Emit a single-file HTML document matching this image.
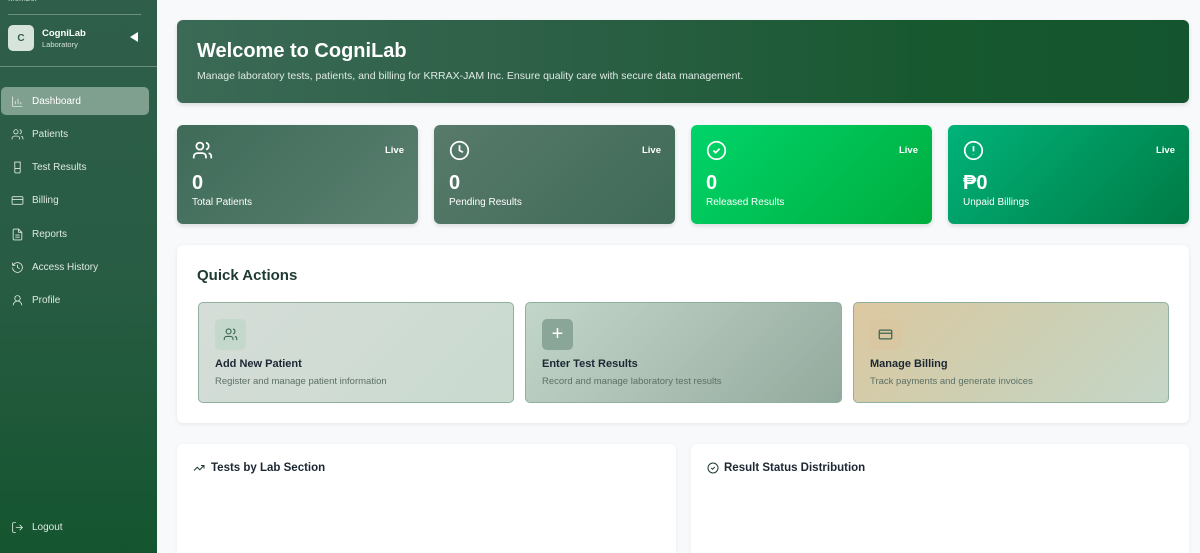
<!DOCTYPE html>
<html style="overflow:hidden;height:553px"><head><meta charset="utf-8"><style>
*{box-sizing:border-box;margin:0;padding:0}
body{width:1200px;height:553px;overflow:hidden;background:#f7f9fb;font-family:"Liberation Sans",sans-serif;position:relative}
.sb{position:absolute;left:0;top:0;width:157px;height:553px;background:linear-gradient(180deg,#2f5f4b 0%,#285c43 50%,#14552f 100%);color:#e6efe9}
.abs{position:absolute}
.nav{position:absolute;left:0;width:157px;height:28px;font-size:10px;color:#dfe9e3;display:flex;align-items:center;padding-left:11px}
.nav svg{width:13px;height:13px;margin-right:8px;stroke:#dfe9e3;fill:none;stroke-width:1.6}
.card{position:absolute;border-radius:6px;box-shadow:0 2px 5px rgba(0,0,0,.12)}
.stat{top:125px;width:241px;height:99px;color:#fff}
.stat svg{position:absolute;left:15px;top:15px;width:21px;height:21px;stroke:#fff;fill:none;stroke-width:2}
.stat .live{position:absolute;right:14px;top:20px;font-size:9.5px;font-weight:bold}
.stat .n{position:absolute;left:15px;top:47px;font-size:20px;font-weight:bold}
.stat .l{position:absolute;left:15px;top:72px;font-size:10px}
.qa{position:absolute;top:302px;height:101px;border:1.5px solid #8fb09f;border-radius:5px}
.qa .ic{position:absolute;left:16px;top:16px;width:31px;height:31px;border-radius:5px;display:flex;align-items:center;justify-content:center}
.qa .t{position:absolute;left:16px;top:55px;font-size:11px;font-weight:bold;color:#1c2733}
.qa .d{position:absolute;left:16px;top:73px;font-size:9.5px;color:#5d7066}
</style></head><body>
<div class="sb">
  <div class="abs" style="left:8px;top:-6px;font-size:8px;color:#cfdcd4">Member</div>
  <div class="abs" style="left:8px;top:14px;width:133px;border-top:1px solid #6d8f7e"></div>
  <div class="abs" style="left:8px;top:25px;width:26px;height:26px;border-radius:5px;background:#d7e4dc;color:#2f5f4b;font-size:10px;font-weight:bold;display:flex;align-items:center;justify-content:center">C</div>
  <div class="abs" style="left:42px;top:28px;font-size:9.5px;font-weight:bold;color:#fff">CogniLab</div>
  <div class="abs" style="left:42px;top:40px;font-size:7.5px;color:#d3e0d8">Laboratory</div>
  <div class="abs" style="left:130px;top:32px;width:0;height:0;border-top:5px solid transparent;border-bottom:5px solid transparent;border-right:8px solid #fff"></div>
  <div class="abs" style="left:0;top:66px;width:157px;border-top:1px solid #6d8f7e"></div>
  <div class="abs" style="left:1px;top:87px;width:148px;height:28px;border-radius:5px;background:#7f9f8f"></div>
  <div class="nav" style="top:87px;color:#fff"><svg viewBox="0 0 24 24"><path d="M3 3v18h18M8 17v-6M13 17V7M18 17v-4"/></svg>Dashboard</div>
  <div class="nav" style="top:120px"><svg viewBox="0 0 24 24"><circle cx="9" cy="7" r="4"/><path d="M2 21v-2a4 4 0 0 1 4-4h6a4 4 0 0 1 4 4v2M16 3.1a4 4 0 0 1 0 7.8M22 21v-2a4 4 0 0 0-3-3.9"/></svg>Patients</div>
  <div class="nav" style="top:153px"><svg viewBox="0 0 24 24"><path d="M6 2h12M7 2v18a2 2 0 0 0 2 2h6a2 2 0 0 0 2-2V2M7 14h10"/></svg>Test Results</div>
  <div class="nav" style="top:186px"><svg viewBox="0 0 24 24"><rect x="2" y="5" width="20" height="14" rx="2"/><path d="M2 10h20"/></svg>Billing</div>
  <div class="nav" style="top:220px"><svg viewBox="0 0 24 24"><path d="M14 2H6a2 2 0 0 0-2 2v16a2 2 0 0 0 2 2h12a2 2 0 0 0 2-2V8zM14 2v6h6M8 13h8M8 17h8"/></svg>Reports</div>
  <div class="nav" style="top:253px"><svg viewBox="0 0 24 24"><path d="M3 12a9 9 0 1 0 3-6.7L3 8M3 3v5h5M12 7v5l4 2"/></svg>Access History</div>
  <div class="nav" style="top:286px"><svg viewBox="0 0 24 24"><circle cx="12" cy="8" r="5"/><path d="M20 21a8 8 0 0 0-16 0"/></svg>Profile</div>
  <div class="nav" style="top:513px"><svg viewBox="0 0 24 24"><path d="M9 21H5a2 2 0 0 1-2-2V5a2 2 0 0 1 2-2h4M16 17l5-5-5-5M21 12H9"/></svg>Logout</div>
</div>

<div class="card" style="left:177px;top:20px;width:1012px;height:83px;background:linear-gradient(90deg,#3b6a56 0%,#2b5f45 40%,#17582f 75%,#14552f 100%)">
  <div class="abs" style="left:20px;top:20px;font-size:20px;font-weight:bold;color:#fff">Welcome to CogniLab</div>
  <div class="abs" style="left:20px;top:50px;font-size:10.5px;color:#dfe9e3">Manage laboratory tests, patients, and billing for KRRAX-JAM Inc. Ensure quality care with secure data management.</div>
</div>

<div class="card stat" style="left:177px;background:linear-gradient(135deg,#3f6b59,#5a7f6f)"><svg viewBox="0 0 24 24"><circle cx="9" cy="7" r="4"/><path d="M2 21v-2a4 4 0 0 1 4-4h6a4 4 0 0 1 4 4v2M16 3.1a4 4 0 0 1 0 7.8M22 21v-2a4 4 0 0 0-3-3.9"/></svg><div class="live">Live</div><div class="n">0</div><div class="l">Total Patients</div></div>
<div class="card stat" style="left:434px;background:linear-gradient(135deg,#587a6b,#3f6a57)"><svg viewBox="0 0 24 24"><circle cx="12" cy="12" r="10"/><path d="M12 6v6l4 2"/></svg><div class="live">Live</div><div class="n">0</div><div class="l">Pending Results</div></div>
<div class="card stat" style="left:691px;background:linear-gradient(135deg,#00d46a,#00ad3e)"><svg viewBox="0 0 24 24"><circle cx="12" cy="12" r="10"/><path d="M8.5 12l2.5 2.5 4.5-4.5"/></svg><div class="live">Live</div><div class="n">0</div><div class="l">Released Results</div></div>
<div class="card stat" style="left:948px;background:linear-gradient(135deg,#00b379,#007a45)"><svg viewBox="0 0 24 24"><circle cx="12" cy="12" r="10"/><path d="M12 7v6M12 16.5v.5"/></svg><div class="live">Live</div><div class="n">₱0</div><div class="l">Unpaid Billings</div></div>

<div class="card" style="left:177px;top:245px;width:1012px;height:178px;background:#fff;box-shadow:0 1px 4px rgba(0,0,0,.08)">
  <div class="abs" style="left:20px;top:22px;font-size:15px;font-weight:bold;color:#1f3a33">Quick Actions</div>
</div>
<div class="qa" style="left:198px;width:316px;background:linear-gradient(135deg,#d6ddd8,#c9dacf)"><div class="ic" style="background:#c4d9cc"><svg width="15" height="15" viewBox="0 0 24 24" fill="none" stroke="#3d6653" stroke-width="1.8"><circle cx="9" cy="7" r="4"/><path d="M2 21v-2a4 4 0 0 1 4-4h6a4 4 0 0 1 4 4v2M16 3.1a4 4 0 0 1 0 7.8M22 21v-2a4 4 0 0 0-3-3.9"/></svg></div><div class="t">Add New Patient</div><div class="d">Register and manage patient information</div></div>
<div class="qa" style="left:525px;width:317px;background:linear-gradient(135deg,#c2d6c9,#a8bcb0 60%,#92aa9d)"><div class="ic" style="background:#8aa698;color:#fff;font-size:20px">+</div><div class="t">Enter Test Results</div><div class="d">Record and manage laboratory test results</div></div>
<div class="qa" style="left:853px;width:316px;background:linear-gradient(135deg,#dcc8a0,#ccd0b4 55%,#c5d6c8)"><div class="ic" style="background:#d9c7a2"><svg width="15" height="15" viewBox="0 0 24 24" fill="none" stroke="#3d6653" stroke-width="2"><rect x="2" y="5" width="20" height="14" rx="2"/><path d="M2 10h20"/></svg></div><div class="t">Manage Billing</div><div class="d">Track payments and generate invoices</div></div>

<div class="card" style="left:177px;top:444px;width:499px;height:109px;border-radius:6px 6px 0 0;background:#fff;box-shadow:0 1px 4px rgba(0,0,0,.06)">
  <svg class="abs" style="left:16px;top:18px" width="12" height="12" viewBox="0 0 24 24" fill="none" stroke="#1f3a33" stroke-width="2"><path d="M22 7l-8.5 8.5-5-5L2 17M16 7h6v6"/></svg>
  <div class="abs" style="left:34px;top:18px;font-size:11.5px;font-weight:bold;color:#1c2733">Tests by Lab Section</div>
</div>
<div class="card" style="left:691px;top:444px;width:498px;height:109px;border-radius:6px 6px 0 0;background:#fff;box-shadow:0 1px 4px rgba(0,0,0,.06)">
  <svg class="abs" style="left:16px;top:18px" width="12" height="12" viewBox="0 0 24 24" fill="none" stroke="#1f3a33" stroke-width="2"><circle cx="12" cy="12" r="10"/><path d="M8.5 12l2.5 2.5 4.5-4.5"/></svg>
  <div class="abs" style="left:33px;top:18px;font-size:11.5px;font-weight:bold;color:#1c2733">Result Status Distribution</div>
</div>
</body></html>
